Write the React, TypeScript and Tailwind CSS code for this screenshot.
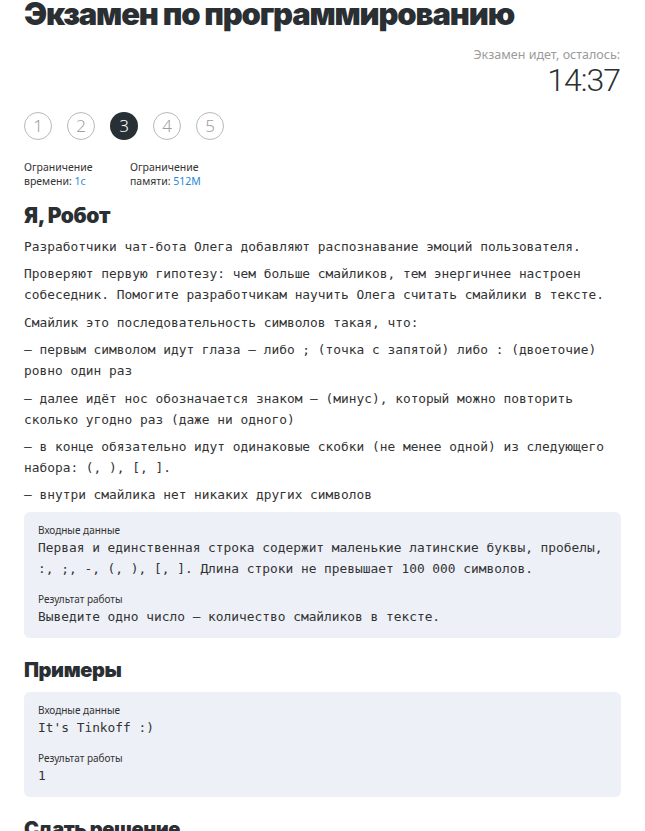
export default function App() {
  const paras: string[] = [
    "Разработчики чат-бота Олега добавляют распознавание эмоций пользователя.",
    "Проверяют первую гипотезу: чем больше смайликов, тем энергичнее настроен собеседник. Помогите разработчикам научить Олега считать смайлики в тексте.",
    "Смайлик это последовательность символов такая, что:",
    "– первым символом идут глаза – либо ; (точка с запятой) либо : (двоеточие) ровно один раз",
    "– далее идёт нос обозначается знаком — (минус), который можно повторить сколько угодно раз (даже ни одного)",
    "– в конце обязательно идут одинаковые скобки (не менее одной) из следующего набора: (, ), [, ].",
    "– внутри смайлика нет никаких других символов",
  ];
  return (
    <div className="w-[645px] h-[831px] overflow-hidden bg-white px-6 text-[#333] font-['Noto_Sans',sans-serif]">
      <h1 className="-mt-[6px] font-['Inter',sans-serif] text-[31px] font-black leading-[40px] tracking-[-1.2px] text-[#2a2f33]">
        Экзамен по программированию
      </h1>
      <div className="mt-[13px] flex flex-col items-end pr-[1px]">
        <div className="text-[12.5px] leading-[16px] text-[#9b9b9b]">Экзамен идет, осталось:</div>
        <div className="mt-[1px] font-['Roboto',sans-serif] text-[32px] font-light leading-[32px] tracking-[-1px] text-[#2a2f33]">
          14:37
        </div>
      </div>
      <div className="mt-[16px] flex gap-[15px]">
        {[1, 2, 3, 4, 5].map((n) =>
          n === 3 ? (
            <div
              key={n}
              className="flex h-[28px] w-[28px] items-center justify-center rounded-full bg-[#283035] text-[17px] font-light text-white"
            >
              {n}
            </div>
          ) : (
            <div
              key={n}
              className="flex h-[28px] w-[28px] items-center justify-center rounded-full border border-[#b8b8b8] text-[17px] font-light text-[#a0a0a0]"
            >
              {n}
            </div>
          )
        )}
      </div>
      <div className="mt-[20px] flex text-[10.5px] leading-[14px] text-[#333]">
        <div className="w-[106px]">
          Ограничение
          <br />
          времени: <span className="text-[#1f8ad6]">1с</span>
        </div>
        <div>
          Ограничение
          <br />
          памяти: <span className="text-[#1f8ad6]">512M</span>
        </div>
      </div>
      <h2 className="mt-[14px] font-['Inter',sans-serif] text-[21px] font-black leading-[28px] tracking-[-0.4px] text-[#2a2f33]">
        Я, Робот
      </h2>
      <div className="mt-[6px] font-['DejaVu_Sans_Mono',monospace] text-[12.85px] leading-[21px] text-[#333]">
        {paras.map((p, i) => (
          <p key={i} className="mb-[6.4px]">
            {p}
          </p>
        ))}
      </div>
      <div className="mt-[1px] rounded-[6px] bg-[#edf0f7] px-[14px] pt-[12px] pb-[11px]">
        <div className="text-[10px] leading-[13px] text-[#333]">Входные данные</div>
        <div className="font-['DejaVu_Sans_Mono',monospace] text-[12.85px] leading-[21px] text-[#333]">
          Первая и единственная строка содержит маленькие латинские буквы, пробелы, :, ;, -, (, ), [, ]. Длина строки не превышает 100 000 символов.
        </div>
        <div className="mt-[14px] text-[10px] leading-[13px] text-[#333]">Результат работы</div>
        <div className="font-['DejaVu_Sans_Mono',monospace] text-[12.85px] leading-[21px] text-[#333]">
          Выведите одно число — количество смайликов в тексте.
        </div>
      </div>
      <h2 className="mt-[18px] font-['Inter',sans-serif] text-[20px] font-black leading-[28px] tracking-[-0.4px] text-[#2a2f33]">
        Примеры
      </h2>
      <div className="mt-[8px] rounded-[6px] bg-[#edf0f7] px-[14px] pt-[12px] pb-[11px]">
        <div className="text-[10px] leading-[13px] text-[#333]">Входные данные</div>
        <div className="font-['DejaVu_Sans_Mono',monospace] text-[12.85px] leading-[21px] text-[#333]">It's Tinkoff :)</div>
        <div className="mt-[14px] text-[10px] leading-[13px] text-[#333]">Результат работы</div>
        <div className="font-['DejaVu_Sans_Mono',monospace] text-[12.85px] leading-[21px] text-[#333]">1</div>
      </div>
      <h2 className="mt-[18px] font-['Inter',sans-serif] text-[20px] font-black leading-[28px] tracking-[-0.4px] text-[#2a2f33]">
        Сдать решение
      </h2>
    </div>
  );
}
